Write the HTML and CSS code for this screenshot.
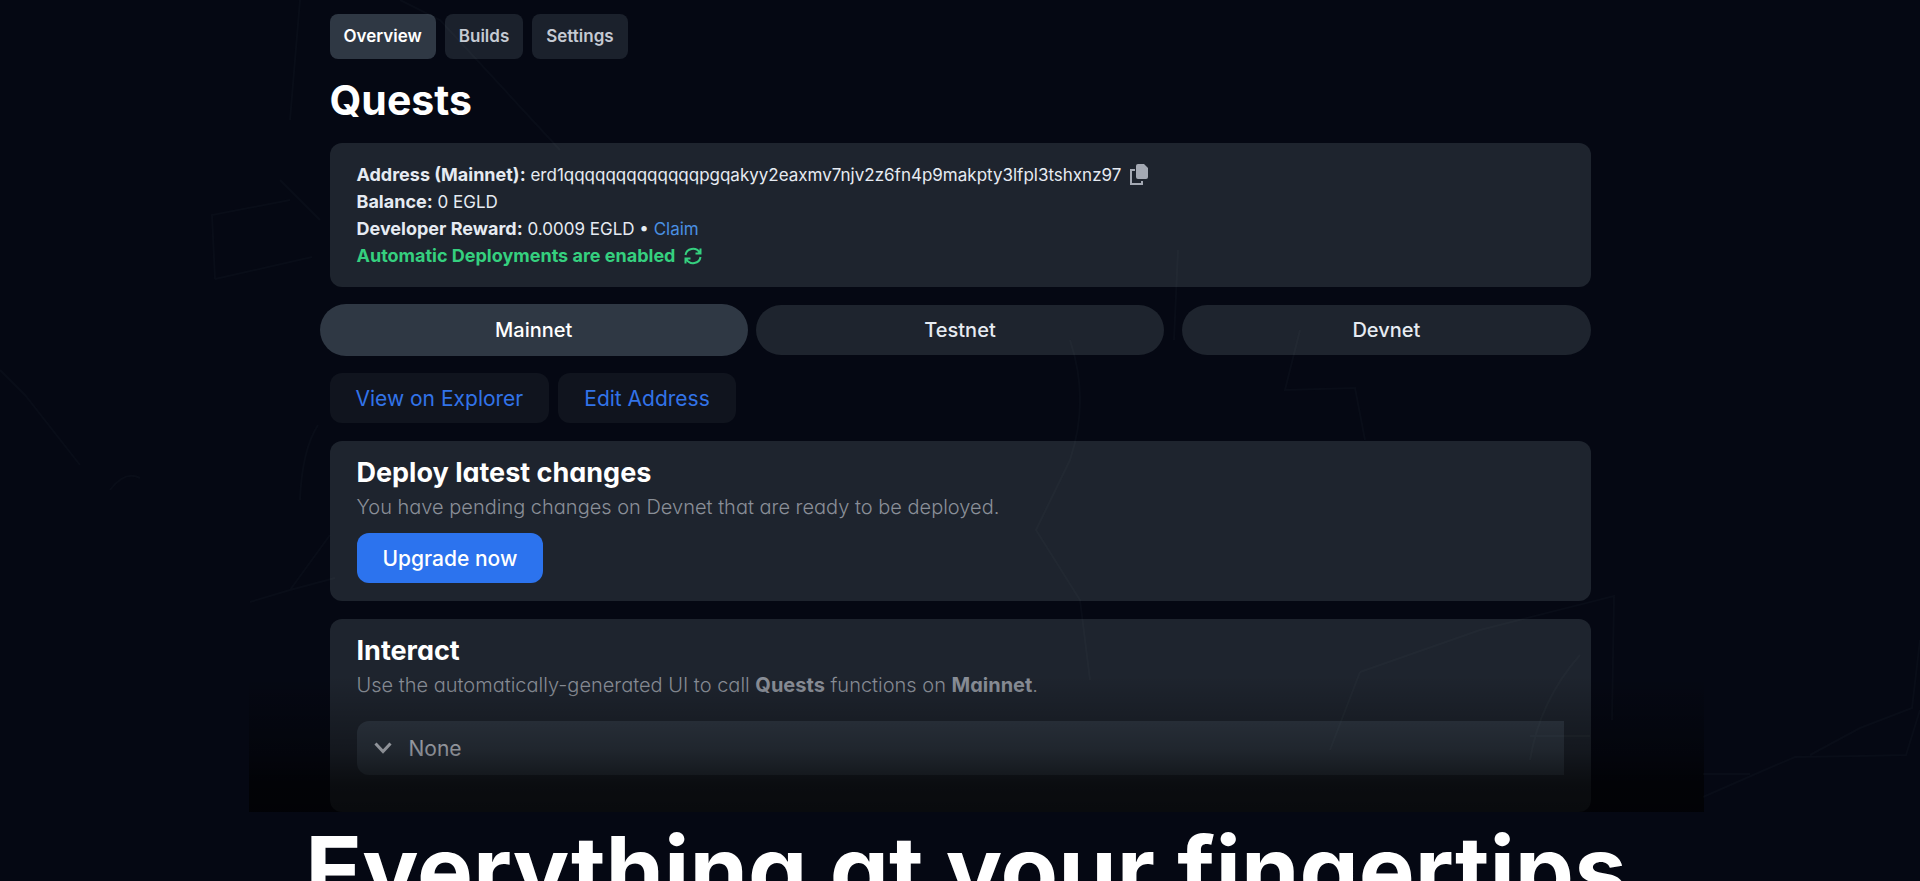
FILE: index.html
```html
<!DOCTYPE html>
<html lang="en">
<head>
    <meta charset="UTF-8">
    <meta name="viewport" content="width=device-width, initial-scale=1.0">
    <title>Quests</title>
    <link rel="stylesheet" href="styles.css">
</head>
<body>
    <svg class="backdrop" viewBox="0 0 1920 881" preserveAspectRatio="xMidYMin slice" aria-hidden="true">
        <path d="M250 602L290 590L335 578M290 590L330 535M318 425Q302 450 300 500M215 279L312 257M215 279L212 215L290 200M280 180L320 220M0 370L25 395L80 465M300 0L290 120M400 0L440 20L560 150M110 490Q125 470 140 478"/>
        <path d="M1070 340Q1090 400 1070 460L1036 530L1080 600L1090 680M1178 250L1174 340M1300 330L1285 390L1355 388L1365 440M1360 672L1480 630L1614 596L1612 720M1360 672L1330 750M1580 655Q1540 700 1530 760M1530 736L1590 736"/>
        <path d="M1703 797L1760 772L1795 757L1860 756L1906 755L1920 710M1810 755L1860 728L1912 708L1920 640M1703 774L1750 774"/>
    </svg>

    <main class="showcase">
        <div class="app">
            <nav class="tabs">
                <button class="tab active" type="button">Overview</button>
                <button class="tab" type="button">Builds</button>
                <button class="tab" type="button">Settings</button>
            </nav>

            <h1 class="app-title">Quests</h1>

            <section class="card info">
                <div class="info-row">
                    <span><strong>Address (Mainnet):</strong> erd1qqqqqqqqqqqqqpgqakyy2eaxmv7njv2z6fn4p9makpty3lfpl3tshxnz97</span>
                    <button class="icon-btn" type="button" aria-label="Copy address">
                        <svg width="18" height="21" viewBox="0 0 18 21">
                            <path d="M5 6H1V20H12V17" fill="none" stroke="currentColor" stroke-width="2"/>
                            <path d="M8 0H14L18 4V13Q18 15 16 15H8Q6 15 6 13V2Q6 0 8 0Z" fill="currentColor"/>
                        </svg>
                    </button>
                </div>
                <div class="info-row"><span><strong>Balance:</strong> 0 EGLD</span></div>
                <div class="info-row"><span><strong>Developer Reward:</strong> 0.0009 EGLD • <a class="claim" href="#">Claim</a></span></div>
                <div class="info-row enabled">
                    <strong>Automatic Deployments are enabled</strong>
                    <svg width="18" height="18" viewBox="0 0 18 18" fill="none" stroke="currentColor" stroke-width="2">
                        <path d="M1.500 8A7.500 7 0 0 1 15.500 5.500M16.500 1.500V6.500H11.500M16.500 10A7.500 7 0 0 1 2.500 12.500M1.500 16.500V11.500H6.500"/>
                    </svg>
                </div>
            </section>

            <div class="networks">
                <button class="network active" type="button">Mainnet</button>
                <button class="network" type="button">Testnet</button>
                <button class="network" type="button">Devnet</button>
            </div>

            <div class="actions">
                <a class="btn btn-dark" href="#">View on Explorer</a>
                <button class="btn btn-dark" type="button">Edit Address</button>
            </div>

            <section class="card">
                <h2 class="card-title">Deploy latest changes</h2>
                <p class="card-text">You have pending changes on Devnet that are ready to be deployed.</p>
                <button class="btn btn-primary" type="button">Upgrade now</button>
            </section>

            <section class="card interact">
                <h2 class="card-title">Interact</h2>
                <p class="card-text">Use the automatically-generated UI to call <strong>Quests</strong> functions on <strong>Mainnet</strong>.</p>
                <div class="picker">
                    <svg class="chevron" width="18" height="12" viewBox="0 0 18 12" fill="none" stroke="currentColor" stroke-width="3">
                        <path d="M1.500 1.500L9 9.500L16.500 1.500"/>
                    </svg>
                    <select class="select" aria-label="Function">
                        <option>None</option>
                    </select>
                </div>
            </section>
            <div class="fade"></div>
        </div>

        <h2 class="headline">Everything at your fingertips</h2>
    </main>
</body>
</html>
```
FILE: styles.css
```css
* {
    box-sizing: border-box;
}
body {
    margin: 0;
    min-height: 100vh;
    background: #050813;
    color: #e6ebf2;
    font-family: Inter, "Liberation Sans", sans-serif;
    font-size: 17px;
    line-height: 27px;
    overflow-x: hidden;
    scrollbar-width: none;
}
button, select {
    font: inherit;
    color: inherit;
    border: none;
    cursor: pointer;
}
h1, h2, p {
    margin: 0;
}
.backdrop {
    position: absolute;
    z-index: 1;
    top: 0;
    left: 0;
    width: 100%;
    height: 100vh;
    fill: none;
    stroke: rgba(160, 180, 200, 0.03);
    stroke-width: 2;
    pointer-events: none;
}
.showcase {
    padding: 14px 16px 0;
}
.app {
    position: relative;
    display: flex;
    flex-direction: column;
    gap: 18px;
    max-width: 1261px;
    margin: 0 auto;
}
.tabs {
    display: flex;
    gap: 9px;
}
.tab {
    height: 45px;
    padding: 0 14px;
    border-radius: 8px;
    background: #1b212c;
    color: #c5cad3;
    font-weight: 600;
}
.tab.active {
    background: #2f3844;
    color: #fff;
}
.app-title {
    margin-bottom: 2px;
    color: #fff;
    font-size: 41px;
    line-height: 46px;
    font-weight: 700;
}
.card {
    padding: 18px 27px;
    border-radius: 12px;
    background: #1e242e;
}
.info-row {
    display: flex;
    align-items: center;
    gap: 9px;
    height: 27px;
}
.info-row strong {
    font-size: 18px;
}
.icon-btn {
    display: flex;
    padding: 0;
    background: none;
    color: #a4a9b3;
}
.claim {
    color: #4a90e2;
    text-decoration: none;
}
.enabled {
    color: #35d07f;
}
.networks {
    display: grid;
    grid-template-columns: repeat(3, 1fr);
    gap: 18px;
}
.network {
    position: relative;
    height: 50px;
    border-radius: 25px;
    background: #1e242e;
    font-size: 20px;
    font-weight: 500;
}
.network.active {
    z-index: 0;
    background: none;
    color: #fff;
}
.network.active::before {
    content: '';
    position: absolute;
    z-index: -1;
    inset: -1px -10px;
    border-radius: 26px;
    background: #2f3844;
}
.actions {
    display: flex;
    gap: 9px;
}
.btn {
    display: inline-flex;
    align-items: center;
    height: 50px;
    padding: 0 26px;
    border-radius: 12px;
    font-size: 21px;
    text-decoration: none;
}
.btn-dark {
    background: #10141e;
    color: #3273e8;
}
.btn-primary {
    background: #2c73ee;
    color: #fff;
    font-weight: 500;
}
.card-title {
    color: #fff;
    font-size: 27px;
    line-height: 28px;
    font-weight: 700;
    font-feature-settings: "cv11";
}
.card-text {
    margin: 6px 0 12px;
    color: #8a8f98;
    font-size: 20px;
    line-height: 28px;
    font-weight: 300;
    font-feature-settings: "cv11";
}
.card-text strong {
    font-weight: 700;
}
.interact {
    padding-bottom: 37px;
}
.picker {
    display: flex;
    align-items: center;
    margin-top: 22px;
    padding-left: 17px;
    border-radius: 12px 0 0 12px;
    background: #303945;
    color: #d5dae3;
}
.select {
    flex: 1;
    height: 54px;
    padding: 0 17px;
    appearance: none;
    background: none;
    font-size: 21px;
}
.fade {
    position: absolute;
    bottom: 0;
    left: -81px;
    right: -113px;
    height: 136px;
    background: linear-gradient(rgba(0, 0, 0, 0), rgba(0, 0, 0, 0.35) 55%, rgba(0, 0, 0, 0.65) 80%, rgba(0, 0, 0, 0.7));
    pointer-events: none;
}
/* centred under the fade, which reaches further right than the cards */
.headline {
    margin-top: 6px;
    padding-left: 12px;
    color: #fff;
    font-size: 94px;
    line-height: 104px;
    font-weight: 700;
    text-align: center;
    white-space: nowrap;
    font-feature-settings: "cv11";
}
```
